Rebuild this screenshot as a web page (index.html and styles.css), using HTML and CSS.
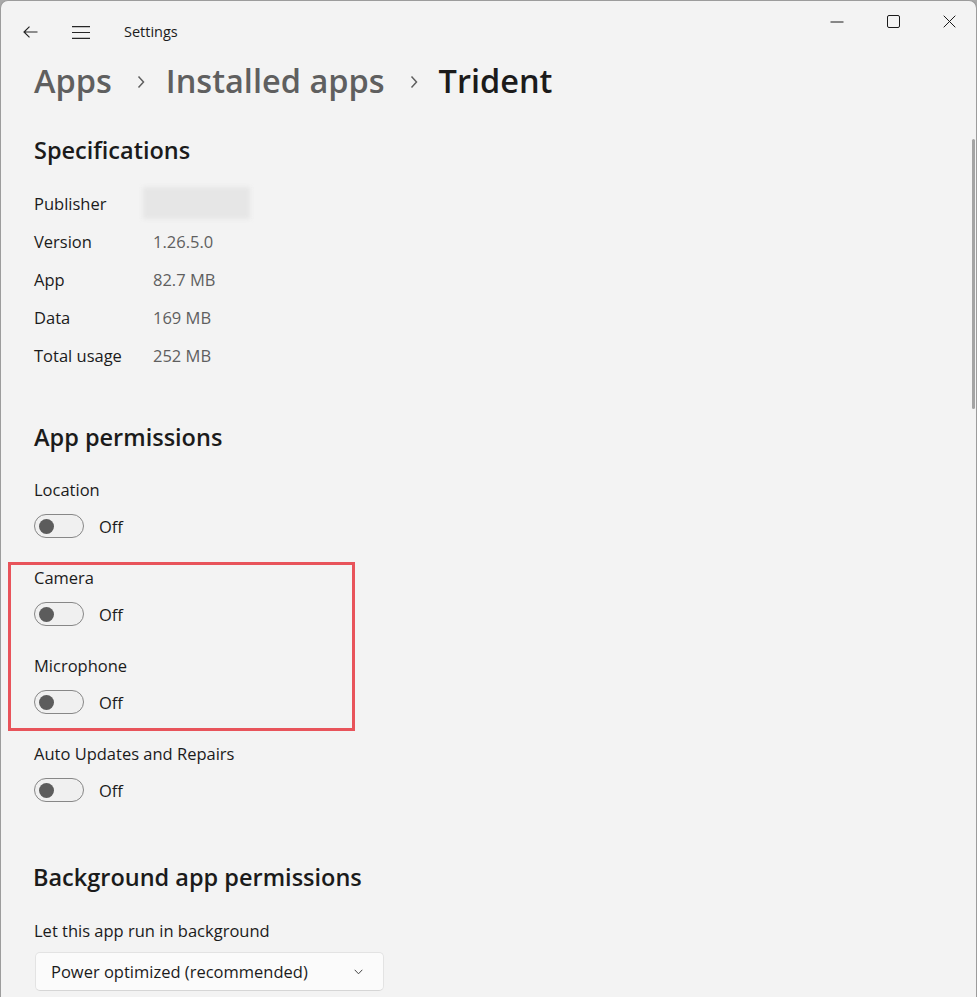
FILE: index.html
```html
<!DOCTYPE html>
<html lang="en">
<head>
    <meta charset="UTF-8">
    <meta name="viewport" content="width=device-width, initial-scale=1.0">
    <title>Settings</title>
    <link rel="stylesheet" href="styles.css">
</head>
<body>
    <div class="window">
        <header class="titlebar">
            <svg class="back-icon" width="15" height="12" viewBox="0 0 15 12">
                <path d="M14.5 6H1.2M6.5 0.6L1 6l5.5 5.4" fill="none" stroke="#262626" stroke-width="1.2"/>
            </svg>
            <svg class="menu-icon" width="18" height="13" viewBox="0 0 18 13">
                <path d="M0 0.6h18M0 6.5h18M0 12.4h18" fill="none" stroke="#262626" stroke-width="1.2"/>
            </svg>
            <span class="app-title">Settings</span>

            <div class="caption-buttons">
                <div class="caption-btn">
                    <svg width="14" height="10" viewBox="0 0 14 10"><path d="M0.5 5h13" stroke="#1a1a1a" stroke-width="1"/></svg>
                </div>
                <div class="caption-btn">
                    <svg width="13" height="13" viewBox="0 0 13 13"><rect x="0.5" y="0.5" width="12" height="12" rx="1.5" fill="none" stroke="#1a1a1a" stroke-width="1"/></svg>
                </div>
                <div class="caption-btn">
                    <svg width="13" height="13" viewBox="0 0 13 13"><path d="M0.7 0.7l11.6 11.6M12.3 0.7L0.7 12.3" stroke="#1a1a1a" stroke-width="1"/></svg>
                </div>
            </div>
        </header>

        <main class="content">
            <h1 class="breadcrumb">
                <span class="crumb">Apps</span>
                <svg class="crumb-sep" width="8" height="14" viewBox="0 0 8 14"><path d="M1.5 1.5L6.5 7l-5 5.5" fill="none" stroke="#5f5f5f" stroke-width="1.5"/></svg>
                <span class="crumb">Installed apps</span>
                <svg class="crumb-sep" width="8" height="14" viewBox="0 0 8 14"><path d="M1.5 1.5L6.5 7l-5 5.5" fill="none" stroke="#5f5f5f" stroke-width="1.5"/></svg>
                <span class="crumb current">Trident</span>
            </h1>

            <h2 class="section-title specs-title">Specifications</h2>
            <div class="spec-list">
                <div class="spec-row">
                    <span class="spec-name">Publisher</span>
                    <span class="spec-value"><span class="blurred"></span></span>
                </div>
                <div class="spec-row">
                    <span class="spec-name">Version</span>
                    <span class="spec-value">1.26.5.0</span>
                </div>
                <div class="spec-row">
                    <span class="spec-name">App</span>
                    <span class="spec-value">82.7 MB</span>
                </div>
                <div class="spec-row">
                    <span class="spec-name">Data</span>
                    <span class="spec-value">169 MB</span>
                </div>
                <div class="spec-row">
                    <span class="spec-name">Total usage</span>
                    <span class="spec-value">252 MB</span>
                </div>
            </div>

            <h2 class="section-title perms-title">App permissions</h2>
            <div class="perm-list">
                <div class="perm">
                    <div class="perm-label">Location</div>
                    <div class="toggle-row"><span class="toggle"><span class="knob"></span></span><span class="toggle-text">Off</span></div>
                </div>

                <div class="highlight">
                    <div class="perm">
                        <div class="perm-label">Camera</div>
                        <div class="toggle-row"><span class="toggle"><span class="knob"></span></span><span class="toggle-text">Off</span></div>
                    </div>
                    <div class="perm">
                        <div class="perm-label">Microphone</div>
                        <div class="toggle-row"><span class="toggle"><span class="knob"></span></span><span class="toggle-text">Off</span></div>
                    </div>
                </div>

                <div class="perm">
                    <div class="perm-label">Auto Updates and Repairs</div>
                    <div class="toggle-row"><span class="toggle"><span class="knob"></span></span><span class="toggle-text">Off</span></div>
                </div>
            </div>

            <h2 class="section-title bg-title">Background app permissions</h2>
            <div class="perm-label bg-label">Let this app run in background</div>
            <div class="dropdown">
                <span>Power optimized (recommended)</span>
                <svg width="9" height="6" viewBox="0 0 9 6"><path d="M0.7 0.8L4.5 4.8l3.8-4" fill="none" stroke="#444" stroke-width="1"/></svg>
            </div>
        </main>

        <div class="scrollbar"></div>
    </div>
</body>
</html>
```

FILE: styles.css
```css
body {
    margin: 0;
    background-color: #a9a9a9;
    font-family: "Open Sans", "Noto Sans", sans-serif;
    color: #1b1b1b;
    overflow: hidden;
}

.window {
    position: relative;
    width: 977px;
    height: 997px;
    box-sizing: border-box;
    background-color: #f3f3f3;
    border: 1px solid #9c9c9c;
    border-bottom: none;
    border-radius: 8px 8px 0 0;
    overflow: hidden;
}

/* title bar */
.titlebar {
    display: flex;
    align-items: center;
    gap: 34px;
    height: 40px;
    margin-top: 11px;
    padding-left: 22px;
}

.app-title {
    font-size: 14.5px;
    color: #1b1b1b;
    margin-top: -2px;
}

.caption-buttons {
    position: absolute;
    top: 0;
    right: -1px;
    display: flex;
}

.caption-btn {
    width: 56px;
    height: 41px;
    display: flex;
    align-items: center;
    justify-content: center;
}

/* main */
.content {
    padding-left: 33px;
}

.breadcrumb {
    display: flex;
    align-items: center;
    margin: 7px 0 0;
    height: 44px;
    font-size: 32.5px;
    font-weight: 600;
    line-height: 44px;
    color: #5f5f5f;
}

.crumb-sep {
    margin: 2px 21px 0 25px;
}

.crumb.current {
    color: #1b1b1b;
}

.section-title {
    margin: 0;
    font-size: 23.5px;
    font-weight: 600;
    line-height: 34px;
    color: #1b1b1b;
}

.specs-title {
    margin-top: 30px;
}

.spec-list {
    margin-top: 17px;
}

.spec-row {
    display: flex;
    align-items: center;
    height: 38px;
    font-size: 16.5px;
}

.spec-name {
    width: 119px;
}

.spec-value {
    color: #5f5f5f;
}

.blurred {
    display: block;
    width: 107px;
    height: 32px;
    margin-left: -10px;
    background-color: #e6e6e6;
    filter: blur(2px);
}

.perms-title {
    margin-top: 46px;
}

.perm-list {
    margin-top: 24px;
}

.perm {
    margin-bottom: 28px;
}

.perm:last-child {
    margin-bottom: 0;
}

.perm-label {
    font-size: 16.5px;
    line-height: 24px;
}

.toggle-row {
    display: flex;
    align-items: center;
    margin-top: 12px;
    height: 24px;
}

.toggle {
    display: flex;
    align-items: center;
    width: 50px;
    height: 24px;
    box-sizing: border-box;
    padding-left: 4px;
    border: 1px solid #878787;
    border-radius: 12px;
    background-color: #f0f0f0;
}

.knob {
    width: 15px;
    height: 15px;
    border-radius: 50%;
    background-color: #5c5c5c;
}

.toggle-text {
    margin-left: 15px;
    font-size: 16.5px;
}

/* red annotation box around camera + mic */
.highlight {
    width: 347px;
    box-sizing: border-box;
    margin: -4px 0 11px -26px;
    padding: 1px 0 14px 23px;
    border: 3px solid #e8535a;
}

.bg-title {
    margin-top: 58px;
    margin-left: -1px;
}

.bg-label {
    margin-top: 25px;
}

.dropdown {
    display: flex;
    align-items: center;
    justify-content: space-between;
    width: 349px;
    height: 39px;
    box-sizing: border-box;
    margin: 9px 0 0 1px;
    padding: 0 20px 0 15px;
    border: 1px solid #e3e3e3;
    border-bottom-color: #d6d6d6;
    border-radius: 5px;
    background-color: #fbfbfb;
    font-size: 16.5px;
}

.scrollbar {
    position: absolute;
    top: 138px;
    right: 1px;
    width: 3px;
    height: 270px;
    border-radius: 2px;
    background-color: #a4a4a4;
}
```
